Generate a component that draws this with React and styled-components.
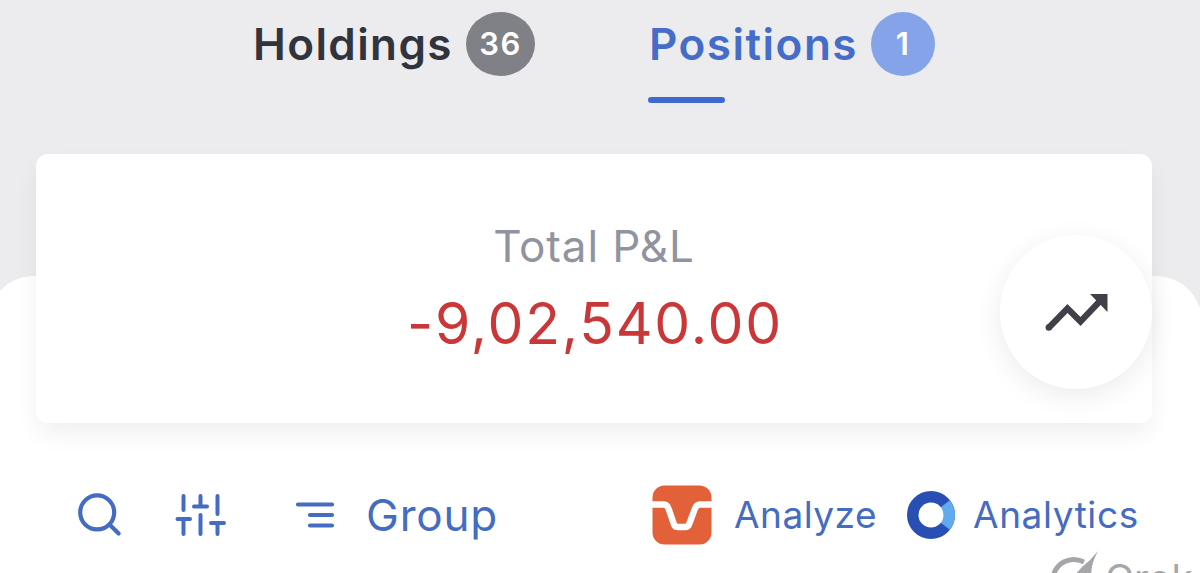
import styled, { createGlobalStyle } from "styled-components";

const GlobalStyle = createGlobalStyle`
  * {
    box-sizing: border-box;
  }

  body {
    margin: 0;
    overflow: hidden;
    font-family: Inter, "Liberation Sans", sans-serif;
  }
`;

const Page = styled.div`
  height: 573px;
  overflow: hidden;
  background-color: #ececee;
`;

const Tabs = styled.nav`
  display: flex;
  gap: 114px;
  height: 154px;
  padding: 12px 0 0 253px;
`;

const Tab = styled.div`
  display: flex;
  flex-direction: column;
  color: ${({ $active }) => ($active ? "#446cc8" : "#31333d")};
`;

const TabRow = styled.div`
  display: flex;
  align-items: center;
  height: 64px;
`;

const TabLabel = styled.span`
  width: ${({ $width }) => $width}px;
  font-size: 44px;
  font-weight: 600;
  line-height: 64px;
  letter-spacing: ${({ $spacing }) => $spacing}px;
  white-space: nowrap;
`;

const Badge = styled.span`
  width: ${({ $width }) => $width}px;
  height: 64px;
  border-radius: 50%;
  background-color: ${({ $color }) => $color};
  color: #ffffff;
  font-size: 31px;
  font-weight: 600;
  line-height: 64px;
  letter-spacing: 1.5px;
  text-align: center;
`;

const Underline = styled.div`
  width: 77px;
  height: 6px;
  margin: 21px 0 0 -1px;
  border-radius: 3px;
  background-color: #4069cf;
`;

const Card = styled.section`
  position: relative;
  display: flex;
  flex-direction: column;
  align-items: center;
  width: 1116px;
  height: 269px;
  margin-left: 36px;
  padding-top: 64px;
  border-radius: 12px;
  background-color: #ffffff;
  box-shadow: 0 12px 26px -3px rgba(0, 0, 0, 0.07);
`;

const CardLabel = styled.div`
  font-size: 44px;
  line-height: 56px;
  letter-spacing: 0.9px;
  color: #91949f;
`;

const Amount = styled.div`
  margin-top: 12px;
  padding-left: 2px;
  font-size: 57px;
  line-height: 76px;
  letter-spacing: 1.8px;
  color: #ca3739;
`;

const ChartButton = styled.button`
  position: absolute;
  top: 81px;
  right: 0;
  width: 152px;
  height: 154px;
  padding: 0;
  border: none;
  border-radius: 50%;
  background-color: #ffffff;
  box-shadow: 0 7px 28px rgba(0, 0, 0, 0.08);

  svg {
    display: block;
  }
`;

const Sheet = styled.main`
  height: 360px;
  margin: -147px -2px 0 -12px;
  padding: 207px 0 0 90px;
  border-radius: 46px 46px 0 0;
  background-color: #ffffff;
`;

const Toolbar = styled.div`
  display: flex;
  align-items: center;
  height: 64px;
  color: #446cc0;

  svg {
    flex-shrink: 0;
  }
`;

const IconSlot = styled.span`
  display: flex;
  margin-right: ${({ $gap }) => $gap}px;
`;

const Action = styled.span`
  width: ${({ $width }) => $width}px;
  font-size: ${({ $size }) => $size}px;
  line-height: 64px;
  letter-spacing: ${({ $spacing }) => $spacing}px;
  white-space: nowrap;
`;

const Watermark = styled.div`
  display: flex;
  gap: 4px;
  margin: 4px 0 0 971px;
  color: #a5a6a9;
  font-size: 39px;
  line-height: 56px;
`;

function TrendIcon() {
  return (
    <svg width="152" height="154" viewBox="0 0 152 154">
      <path
        d="M49 92.5 L67.5 73.5 L80.5 86.5 L101 65"
        fill="none"
        stroke="#3f4048"
        strokeWidth="6.2"
      />
      <circle cx="48.8" cy="92.5" r="3.2" fill="#3f4048" />
      <path d="M90 59 H107.5 V77 Z" fill="#3f4048" />
    </svg>
  );
}

function SearchIcon() {
  return (
    <svg width="44" height="44" viewBox="0 0 44 44" fill="none" stroke="currentColor">
      <circle cx="19.2" cy="19.4" r="17" strokeWidth="4.2" />
      <path d="M31.5 31.5 L40.6 40.6" strokeWidth="4.2" strokeLinecap="round" />
    </svg>
  );
}

function FilterIcon() {
  return (
    <svg width="52" height="44" viewBox="0 0 52 44" fill="none" stroke="currentColor">
      <path
        d="M8.5 3 V17 M8.5 27 V41 M2.5 26 H15 M25.5 3 V13 M19 13.5 H32 M25.5 22 V41 M42.5 3 V21 M36 30 H49 M42.5 31 V41"
        strokeWidth="4"
        strokeLinecap="round"
      />
    </svg>
  );
}

function SortIcon() {
  return (
    <svg width="40" height="28" viewBox="0 0 40 28" fill="none" stroke="currentColor">
      <path
        d="M3 3.5 H37 M15 14 H37 M15 24.5 H37"
        strokeWidth="4.2"
        strokeLinecap="round"
      />
    </svg>
  );
}

function AnalyzeLogo() {
  return (
    <svg width="60" height="60" viewBox="0 0 60 60">
      <rect x="0.5" y="0.5" width="59" height="59" rx="12" fill="#e26138" />
      <path
        d="M0 19.5 H12 Q15 19.5 16.5 23.500 L22 39.5 Q23 42 26 42 H33 Q36 42 37 39.5 L43 23.500 Q44.5 19.5 48 19.5 H60"
        fill="none"
        stroke="#ffffff"
        strokeWidth="6.4"
      />
    </svg>
  );
}

function AnalyticsLogo() {
  return (
    <svg width="48" height="48" viewBox="0 0 48 48">
      <circle cx="24" cy="24" r="18" fill="none" stroke="#2850b4" strokeWidth="12" />
      <path
        d="M33.4 16.5 L42.9 9.2 A24 24 0 0 1 42.9 38.8 L33.4 31.5 Z"
        fill="#62aaf0"
      />
      <circle cx="24" cy="24" r="12.5" fill="#ffffff" />
    </svg>
  );
}

function GrokMark() {
  return (
    <svg width="52" height="48" viewBox="0 0 52 48" fill="none">
      <path d="M3 30 C6 10 22 5 35 11" stroke="#a5a6a9" strokeWidth="5" />
      <path d="M22 28 L33 16 Q42 9 49 0 C45 8 42 14 42 28 Z" fill="#a5a6a9" />
    </svg>
  );
}

export default function App() {
  return (
    <Page>
      <GlobalStyle />
      <Tabs>
        <Tab>
          <TabRow>
            <TabLabel $width={213} $spacing={1.4}>Holdings</TabLabel>
            <Badge $width={69} $color="#808186">36</Badge>
          </TabRow>
        </Tab>
        <Tab $active>
          <TabRow>
            <TabLabel $width={222} $spacing={1.5}>Positions</TabLabel>
            <Badge $width={64} $color="#85a3e8">1</Badge>
          </TabRow>
          <Underline />
        </Tab>
      </Tabs>

      <Card>
        <CardLabel>Total P&amp;L</CardLabel>
        <Amount>-9,02,540.00</Amount>
        <ChartButton aria-label="Chart">
          <TrendIcon />
        </ChartButton>
      </Card>

      <Sheet>
        <Toolbar>
          <IconSlot $gap={53}>
            <SearchIcon />
          </IconSlot>
          <IconSlot $gap={68}>
            <FilterIcon />
          </IconSlot>
          <IconSlot $gap={31}>
            <SortIcon />
          </IconSlot>
          <Action $width={286} $size={44} $spacing={0.8}>Group</Action>
          <IconSlot $gap={22}>
            <AnalyzeLogo />
          </IconSlot>
          <Action $width={173} $size={37} $spacing={0.5}>Analyze</Action>
          <IconSlot $gap={18}>
            <AnalyticsLogo />
          </IconSlot>
          <Action $width={170} $size={37} $spacing={0.6}>Analytics</Action>
        </Toolbar>
        <Watermark>
          <GrokMark />
          <span>Grok</span>
        </Watermark>
      </Sheet>
    </Page>
  );
}
